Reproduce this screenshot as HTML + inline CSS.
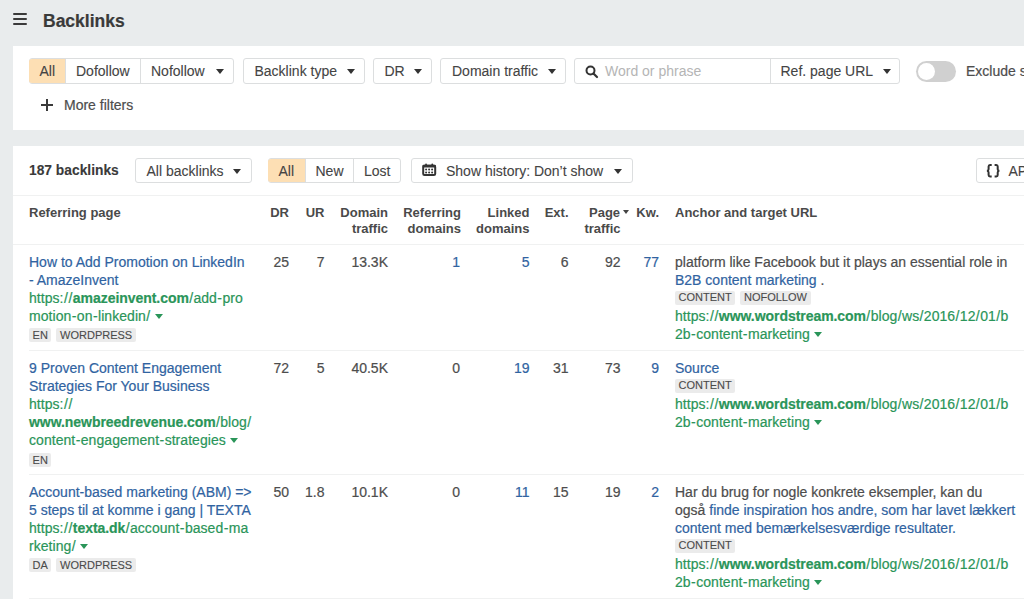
<!DOCTYPE html>
<html><head><meta charset="utf-8">
<style>
*{box-sizing:border-box;margin:0;padding:0}
html,body{width:1024px;height:599px;overflow:hidden}
body{background:#e9eced;font-family:"Liberation Sans",sans-serif;font-size:14px;color:#4d4d4d;position:relative;-webkit-text-stroke:0.2px currentColor}
.abs{position:absolute;white-space:nowrap}
.panel{position:absolute;background:#fff}
.btn{position:absolute;height:26px;border:1px solid #dcdedf;border-radius:3px;background:#fff;line-height:24px;padding:0 11px;color:#444;white-space:nowrap;-webkit-text-stroke:0.1px currentColor}
.seg{position:absolute;top:0;bottom:0;line-height:24px;padding-left:10px;white-space:nowrap}
.caret{display:inline-block;width:0;height:0;border-left:4px solid transparent;border-right:4px solid transparent;border-top:5px solid #333;vertical-align:middle;position:relative;top:-1px}
.hd{position:absolute;font-weight:bold;font-size:13px;line-height:16px;color:#4a4a4a;white-space:nowrap;-webkit-text-stroke:0}
.r{text-align:right}
.num{position:absolute;line-height:18px;text-align:right;white-space:nowrap}
.lnk{color:#3063a1}
.url{color:#2a9559}
.url b{font-weight:bold;letter-spacing:-0.05px}
.url i{font-style:normal;padding:0 0.35px}
.url u{text-decoration:none;padding:0 0.4px}
.url{letter-spacing:0.05px}
.tag{display:inline-block;background:#ebebeb;color:#4a4a4a;-webkit-text-stroke:0.1px #4a4a4a;font-size:11px;line-height:14px;height:13.5px;padding:0 3.6px;border-radius:2px;margin-right:5px;vertical-align:top}
.cell{position:absolute;line-height:18px;white-space:nowrap}
.cv{display:inline-block;width:0;height:0;border-left:4px solid transparent;border-right:4px solid transparent;border-top:5px solid #2a9559;vertical-align:middle;margin-left:4px;position:relative;top:-1px}
.divider{position:absolute;height:1px;background:#f0f1f1}
</style></head><body>

<!-- top header -->
<div class="abs" style="left:12.7px;top:13.2px;width:14.3px;height:2px;background:#3a3a3a;border-radius:1px"></div>
<div class="abs" style="left:12.7px;top:18.3px;width:14.3px;height:2px;background:#3a3a3a;border-radius:1px"></div>
<div class="abs" style="left:12.7px;top:23.2px;width:14.3px;height:2px;background:#3a3a3a;border-radius:1px"></div>
<div class="abs" style="left:43px;top:9px;font-size:17.5px;font-weight:bold;line-height:24px;color:#3a3a3a">Backlinks</div>

<!-- panel 1 -->
<div class="panel" style="left:13px;top:46px;width:1011px;height:84px"></div>

<div class="btn" style="left:29px;top:58px;width:205px;padding:0">
  <div class="seg" style="left:-1px;width:36px;background:#fddfb4;border-radius:3px 0 0 3px;padding-left:10.5px">All</div>
  <div class="seg" style="left:35px;width:75px;border-left:1px solid #dcdedf;padding-left:10px">Dofollow</div>
  <div class="seg" style="left:109.5px;width:94.5px;border-left:1px solid #dcdedf;padding-left:10.5px">Nofollow<span class="caret" style="margin-left:11px"></span></div>
</div>
<div class="btn" style="left:243px;top:58px;width:121.5px;padding-left:10.5px">Backlink type<span class="caret" style="margin-left:10px"></span></div>
<div class="btn" style="left:373px;top:58px;width:59px;padding-left:10.5px">DR<span class="caret" style="margin-left:9.5px"></span></div>
<div class="btn" style="left:440px;top:58px;width:126px">Domain traffic<span class="caret" style="margin-left:10px"></span></div>
<div class="btn" style="left:574px;top:58px;width:326px;padding:0">
  <div class="seg" style="left:0;width:196px;color:#b5b5b5;padding-left:30px;-webkit-text-stroke:0">Word or phrase</div>
  <div class="seg" style="left:194.5px;width:131px;border-left:1px solid #dcdedf;padding-left:10px">Ref. page URL<span class="caret" style="margin-left:10px"></span></div>
</div>
<svg class="abs" style="left:584.5px;top:65px" width="14" height="14" viewBox="0 0 14 14"><circle cx="5.5" cy="5.5" r="4" fill="none" stroke="#333" stroke-width="2"/><line x1="8.5" y1="8.5" x2="12" y2="12" stroke="#333" stroke-width="2.2" stroke-linecap="round"/></svg>
<div class="abs" style="left:916px;top:60.5px;width:40px;height:21px;border-radius:11px;background:#d0d0d0"></div>
<div class="abs" style="left:918px;top:62.5px;width:17px;height:17px;border-radius:50%;background:#fff"></div>
<div class="abs" style="left:966px;top:59px;line-height:24px">Exclude subdomains</div>

<div class="abs" style="left:40.5px;top:104px;width:12.3px;height:2px;background:#3a3a3a"></div>
<div class="abs" style="left:45.6px;top:99px;width:2px;height:12px;background:#3a3a3a"></div>
<div class="abs" style="left:64px;top:96px;line-height:18px">More filters</div>

<!-- panel 2 -->
<div class="panel" style="left:13px;top:146px;width:1011px;height:453px"></div>
<div class="abs" style="left:29px;top:162px;font-weight:bold;font-size:13.8px;line-height:18px;color:#3a3a3a;-webkit-text-stroke:0.1px #3a3a3a">187 backlinks</div>
<div class="btn" style="left:135px;top:158px;width:117px;height:25px;line-height:24px;padding-left:10.5px">All backlinks<span class="caret" style="margin-left:9.5px"></span></div>
<div class="btn" style="left:268px;top:158px;width:133px;height:25px;padding:0">
  <div class="seg" style="left:-1px;width:36.5px;background:#fddfb4;border-radius:3px 0 0 3px;line-height:24px;padding-left:10.5px">All</div>
  <div class="seg" style="left:35.5px;width:48px;border-left:1px solid #dcdedf;line-height:24px">New</div>
  <div class="seg" style="left:83.5px;width:48.5px;border-left:1px solid #dcdedf;line-height:24px;padding-left:10.5px">Lost</div>
</div>
<div class="btn" style="left:411px;top:158px;width:222px;height:25px;line-height:24px;padding-left:34px">Show history: Don’t show<span class="caret" style="margin-left:11px"></span></div>
<svg class="abs" style="left:422px;top:163px" width="15" height="14" viewBox="0 0 15 14"><rect x="1.2" y="2.7" width="12" height="9.3" rx="1.3" fill="none" stroke="#333" stroke-width="2"/><rect x="0.5" y="1.8" width="13.4" height="2.6" rx="1" fill="#333"/><rect x="3.2" y="0.4" width="1.7" height="2.5" rx="0.8" fill="#333"/><rect x="9.4" y="0.4" width="1.7" height="2.5" rx="0.8" fill="#333"/><g fill="#333"><circle cx="4.1" cy="6.6" r="1"/><circle cx="7.1" cy="6.6" r="1"/><circle cx="10.1" cy="6.6" r="1"/><circle cx="4.1" cy="9.4" r="1"/><circle cx="7.1" cy="9.4" r="1"/><circle cx="10.1" cy="9.4" r="1"/></g></svg>
<div class="btn" style="left:976px;top:158px;width:80px;height:25px;line-height:24px;padding-left:31.5px">API</div>
<svg class="abs" style="left:985px;top:163px" width="17" height="16" viewBox="0 0 17 16"><path d="M6.7 2 H5 Q3.6 2 3.6 3.5 V6.2 Q3.6 7.6 2 7.8 Q3.6 8 3.6 9.4 V12 Q3.6 13.4 5 13.4 H6.7 M9.6 2 H11.3 Q12.7 2 12.7 3.5 V6.2 Q12.7 7.6 14.3 7.8 Q12.7 8 12.7 9.4 V12 Q12.7 13.4 11.3 13.4 H9.6" fill="none" stroke="#333" stroke-width="2"/></svg>

<div class="divider" style="left:13px;top:195px;width:1011px"></div>
<div class="divider" style="left:13px;top:244px;width:1011px"></div>

<!-- headers -->
<div class="hd" style="left:29px;top:204.5px">Referring page</div>
<div class="hd r" style="left:250px;width:39px;top:204.5px">DR</div>
<div class="hd r" style="left:290px;width:34.5px;top:204.5px">UR</div>
<div class="hd r" style="left:330px;width:58px;top:204.5px">Domain<br>traffic</div>
<div class="hd r" style="left:395px;width:66px;top:204.5px">Referring<br>domains</div>
<div class="hd r" style="left:470px;width:59.5px;top:204.5px">Linked<br>domains</div>
<div class="hd r" style="left:530px;width:38.5px;top:204.5px">Ext.</div>
<div class="hd" style="left:589px;top:204.5px">Page<span class="caret" style="margin-left:3px;border-left-width:3.5px;border-right-width:3.5px;border-top-width:4.5px;border-top-color:#444"></span></div>
<div class="hd r" style="left:570px;width:50.5px;top:220.5px">traffic</div>
<div class="hd r" style="left:630px;width:29px;top:204.5px">Kw.</div>
<div class="hd" style="left:675px;top:204.5px">Anchor and target URL</div>

<!-- row 1 -->
<div class="cell lnk" style="left:29px;top:253px">How to Add Promotion on LinkedIn<br>- AmazeInvent</div>
<div class="cell url" style="left:29px;top:289px">https:<i>/</i><i>/</i><b>amazeinvent.com</b><i>/</i>add<u>-</u>pro<br>motion<u>-</u>on<u>-</u>linkedin<i>/</i><span class="cv"></span></div>
<div class="cell" style="left:29px;top:328px;line-height:13px"><span class="tag">EN</span><span class="tag">WORDPRESS</span></div>
<div class="num" style="left:250px;width:39px;top:253px">25</div>
<div class="num" style="left:290px;width:34.5px;top:253px">7</div>
<div class="num" style="left:330px;width:58px;top:253px">13.3K</div>
<div class="num lnk" style="left:400px;width:60px;top:253px">1</div>
<div class="num lnk" style="left:470px;width:59.5px;top:253px">5</div>
<div class="num" style="left:530px;width:38.5px;top:253px">6</div>
<div class="num" style="left:580px;width:40.5px;top:253px">92</div>
<div class="num lnk" style="left:630px;width:29px;top:253px">77</div>
<div class="cell" style="left:675px;top:253px">platform like Facebook but it plays an essential role in<br><span class="lnk">B2B content marketing</span> .</div>
<div class="cell" style="left:675px;top:291px;line-height:13px"><span class="tag" style="line-height:13px">CONTENT</span><span class="tag" style="line-height:13px">NOFOLLOW</span></div>
<div class="cell url" style="left:675px;top:307px">https:<i>/</i><i>/</i><b>www.wordstream.com</b><i>/</i>blog<i>/</i>ws<i>/</i>2016<i>/</i>12<i>/</i>01<i>/</i>b<br>2b<u>-</u>content<u>-</u>marketing<span class="cv"></span></div>
<div class="divider" style="left:29px;top:350px;width:995px"></div>

<!-- row 2 -->
<div class="cell lnk" style="left:29px;top:359px">9 Proven Content Engagement<br>Strategies For Your Business</div>
<div class="cell url" style="left:29px;top:395px">https:<i>/</i><i>/</i><br><b>www.newbreedrevenue.com</b><i>/</i>blog<i>/</i><br>content<u>-</u>engagement<u>-</u>strategies<span class="cv"></span></div>
<div class="cell" style="left:29px;top:453px;line-height:13px"><span class="tag">EN</span></div>
<div class="num" style="left:250px;width:39px;top:359px">72</div>
<div class="num" style="left:290px;width:34.5px;top:359px">5</div>
<div class="num" style="left:330px;width:58px;top:359px">40.5K</div>
<div class="num" style="left:400px;width:60px;top:359px">0</div>
<div class="num lnk" style="left:470px;width:59.5px;top:359px">19</div>
<div class="num" style="left:530px;width:38.5px;top:359px">31</div>
<div class="num" style="left:580px;width:40.5px;top:359px">73</div>
<div class="num lnk" style="left:630px;width:29px;top:359px">9</div>
<div class="cell lnk" style="left:675px;top:359px">Source</div>
<div class="cell" style="left:675px;top:379px;line-height:13px"><span class="tag" style="line-height:13px">CONTENT</span></div>
<div class="cell url" style="left:675px;top:395px">https:<i>/</i><i>/</i><b>www.wordstream.com</b><i>/</i>blog<i>/</i>ws<i>/</i>2016<i>/</i>12<i>/</i>01<i>/</i>b<br>2b<u>-</u>content<u>-</u>marketing<span class="cv"></span></div>
<div class="divider" style="left:29px;top:474px;width:995px"></div>

<!-- row 3 -->
<div class="cell lnk" style="left:29px;top:483px">Account-based marketing (ABM) =&gt;<br>5 steps til at komme i gang | TEXTA</div>
<div class="cell url" style="left:29px;top:519px">https:<i>/</i><i>/</i><b>texta.dk</b><i>/</i>account<u>-</u>based<u>-</u>ma<br>rketing<i>/</i><span class="cv"></span></div>
<div class="cell" style="left:29px;top:558px;line-height:13px"><span class="tag">DA</span><span class="tag">WORDPRESS</span></div>
<div class="num" style="left:250px;width:39px;top:483px">50</div>
<div class="num" style="left:290px;width:34.5px;top:483px">1.8</div>
<div class="num" style="left:330px;width:58px;top:483px">10.1K</div>
<div class="num" style="left:400px;width:60px;top:483px">0</div>
<div class="num lnk" style="left:470px;width:59.5px;top:483px">11</div>
<div class="num" style="left:530px;width:38.5px;top:483px">15</div>
<div class="num" style="left:580px;width:40.5px;top:483px">19</div>
<div class="num lnk" style="left:630px;width:29px;top:483px">2</div>
<div class="cell" style="left:675px;top:483px">Har du brug for nogle konkrete eksempler, kan du<br>også <span class="lnk">finde inspiration hos andre, som har lavet lækkert</span><br><span class="lnk">content med bemærkelsesværdige resultater.</span></div>
<div class="cell" style="left:675px;top:539px;line-height:13px"><span class="tag" style="line-height:13px">CONTENT</span></div>
<div class="cell url" style="left:675px;top:555px">https:<i>/</i><i>/</i><b>www.wordstream.com</b><i>/</i>blog<i>/</i>ws<i>/</i>2016<i>/</i>12<i>/</i>01<i>/</i>b<br>2b<u>-</u>content<u>-</u>marketing<span class="cv"></span></div>
<div class="divider" style="left:29px;top:598px;width:995px"></div>

</body></html>
